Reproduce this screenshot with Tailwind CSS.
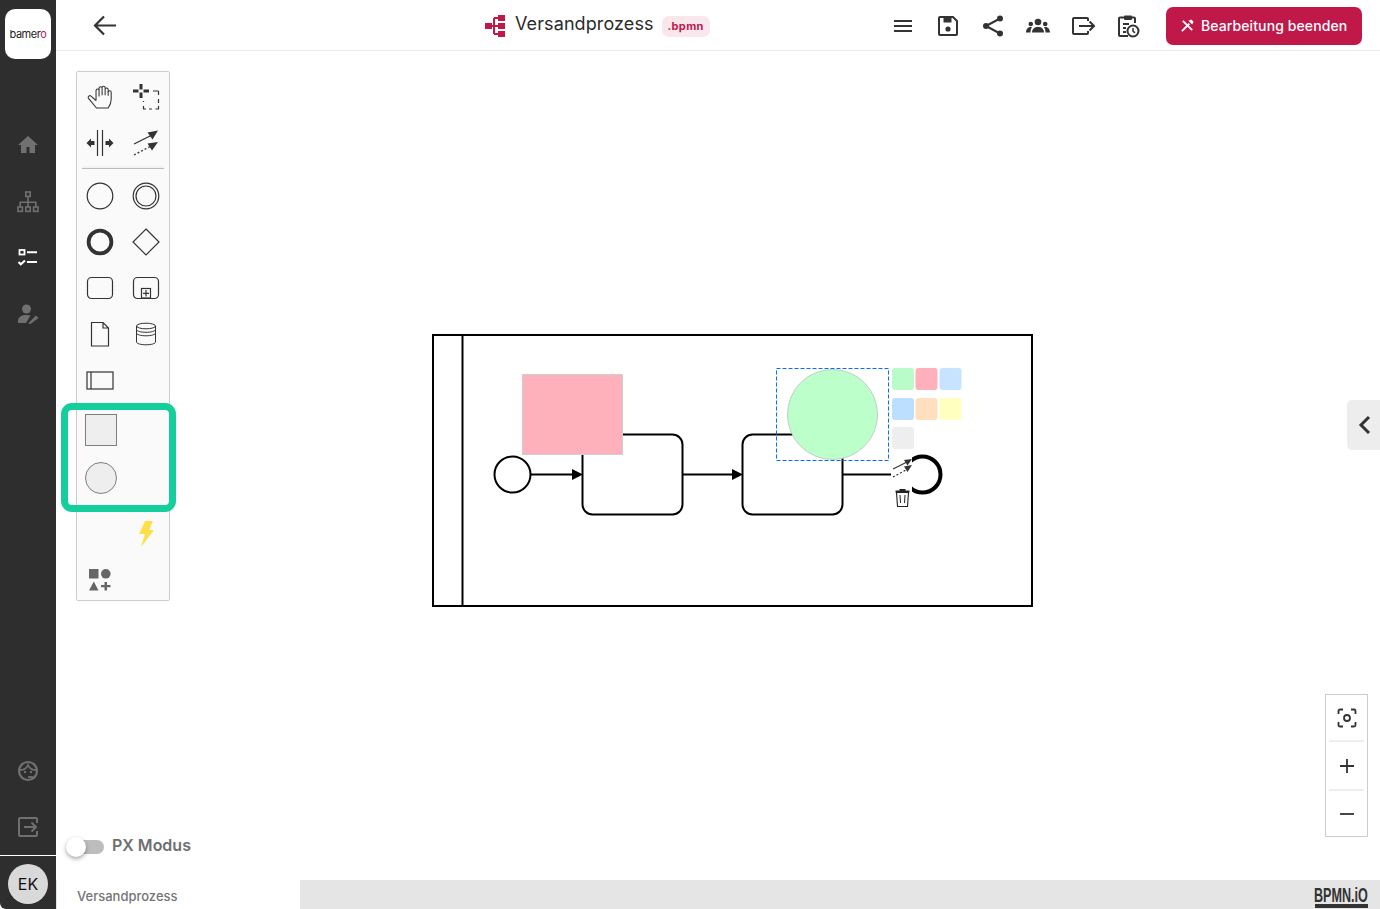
<!DOCTYPE html>
<html lang="de">
<head>
    <meta charset="UTF-8">
    <title>Versandprozess</title>
    <script src="https://cdn.jsdelivr.net/npm/@tailwindcss/browser@4"></script>
</head>
<body class="bg-white overflow-hidden font-['Inter','Liberation_Sans',sans-serif]">
<div class="flex h-[909px] w-[1380px]">

    <!-- sidebar -->
    <aside class="w-[56px] shrink-0 h-full bg-[#2e2e2e] rounded-bl-[6px] flex flex-col items-center">
        <div class="mt-[9px] w-[46px] h-[50px] bg-white rounded-[10px] flex items-center justify-center text-[11px] tracking-[-0.5px] text-[#222]">bamer<span class="text-[#c1184a]">o</span></div>

        <button class="mt-[74px] w-6 h-6 text-[#707070]">
            <svg viewBox="0 0 24 24" class="w-6 h-6" fill="currentColor"><path d="M12 3 2 12h3v8h5.500v-6h3v6H19v-8h3z"/></svg>
        </button>
        <button class="mt-[33px] w-6 h-6 text-[#707070]">
            <svg viewBox="0 0 24 24" class="w-6 h-6" fill="none" stroke="currentColor" stroke-width="1.600"><rect x="9.800" y="2" width="4.400" height="4.400"/><rect x="2" y="17" width="4.400" height="4.400"/><rect x="9.800" y="17" width="4.400" height="4.400"/><rect x="17.600" y="17" width="4.400" height="4.400"/><path d="M12 6.400V17M4.200 17v-4.800h15.600V17"/></svg>
        </button>
        <button class="mt-[32px] w-6 h-6 text-white">
            <svg viewBox="0 0 24 24" class="w-6 h-6" fill="none" stroke="currentColor"><rect x="3.500" y="4" width="5" height="4.500" stroke-width="1.800"/><path d="M11 6.200h10M11 16h10" stroke-width="2"/><path d="m2.500 16 2.300 2.300L9 14.500" stroke-width="2"/></svg>
        </button>
        <button class="mt-[32px] w-6 h-6 text-[#707070]">
            <svg viewBox="0 0 24 24" class="w-6 h-6" fill="currentColor"><circle cx="10.500" cy="7" r="4.500"/><path d="M2 21v-2.500C2 15 6 13 10.500 13c1.500 0 2.800.2 4 .6L10 21z"/><path d="m12 21.500 8-8 2.500 2.500-8 6z"/></svg>
        </button>

        <button class="mt-auto w-6 h-6 text-[#707070]">
            <svg viewBox="0 0 24 24" class="w-6 h-6" fill="none" stroke="currentColor" stroke-width="2.200"><circle cx="12" cy="12" r="9"/><path d="M4 11c3.500 0 6.500-1.500 8-5 1.500 3.500 4.500 5 8 5" stroke-width="1.800"/><circle cx="9" cy="13" r="1.200" fill="currentColor" stroke="none"/><circle cx="15" cy="13" r="1.200" fill="currentColor" stroke="none"/><path d="M12 18h5" stroke-width="1.800"/></svg>
        </button>
        <button class="mt-[32px] mb-[16px] w-6 h-6 text-[#707070]">
            <svg viewBox="0 0 24 24" class="w-6 h-6" fill="none" stroke="currentColor" stroke-width="2"><path d="M21 8V4a1 1 0 0 0-1-1H4a1 1 0 0 0-1 1v16a1 1 0 0 0 1 1h16a1 1 0 0 0 1-1v-4"/><path d="M8 12h12M15.500 7.500 20 12l-4.500 4.500"/></svg>
        </button>
        <div class="w-full border-t border-white pt-[8px] pb-[5px] flex justify-center">
            <div class="w-10 h-10 rounded-full bg-[#d9d9d9] flex items-center justify-center text-[16px] text-[#111]">EK</div>
        </div>
    </aside>

    <main class="relative flex-1 flex flex-col min-w-0">
        <!-- top bar -->
        <header class="h-[51px] shrink-0 border-b border-[#eaeaea] flex items-center relative">
            <button class="ml-[37px] w-6 h-6 text-[#333]">
                <svg viewBox="0 0 24 24" class="w-6 h-6" fill="none" stroke="currentColor" stroke-width="2.200"><path d="M23 12.500H3M11 3.500l-9 9 9 9"/></svg>
            </button>
            <div class="ml-[368px] flex items-center">
                <svg viewBox="0 0 20 22" class="w-[20px] h-[22px] text-[#c1184a] mt-[2px]" fill="currentColor"><rect x="0" y="8" width="7" height="6"/><rect x="7" y="10" width="6" height="2"/><rect x="8" y="3" width="2" height="16"/><rect x="13" y="0" width="7" height="6"/><rect x="13" y="8" width="7" height="6"/><rect x="13" y="16" width="7" height="6"/><rect x="9" y="2" width="5" height="2"/><rect x="9" y="18" width="5" height="2"/></svg>
                <span class="ml-[10px] text-[18px] leading-none tracking-[0.1px] text-[#2b2b2b] relative top-[-1px]">Versandprozess</span>
                <span class="ml-[8px] mt-[2px] h-[21px] w-[48px] rounded-[7px] bg-[#f9e7ed] text-[#c1184a] text-[11px] font-bold tracking-[0.4px] flex items-center justify-center">.bpmn</span>
            </div>
            <div class="ml-[181px] mt-[2px] flex items-center gap-[21px] text-[#333]">
                <svg viewBox="0 0 24 24" class="w-6 h-6" fill="none" stroke="currentColor" stroke-width="2"><path d="M3 7h18M3 12h18M3 17h18"/></svg>
                <svg viewBox="0 0 24 24" class="w-6 h-6" fill="none" stroke="currentColor" stroke-width="2"><path d="M4 3h13l4 4v13a1 1 0 0 1-1 1H4a1 1 0 0 1-1-1V4a1 1 0 0 1 1-1z"/><path d="M7.500 3.500h8v5h-8z" fill="currentColor" stroke="none"/><circle cx="12" cy="15" r="2.600" fill="currentColor" stroke="none"/></svg>
                <svg viewBox="0 0 24 24" class="w-6 h-6" fill="currentColor"><circle cx="19" cy="4.500" r="3"/><circle cx="5" cy="12" r="3"/><circle cx="19" cy="19.500" r="3"/><path d="M5 12 19 4.500M5 12l14 7.500" fill="none" stroke="currentColor" stroke-width="2"/></svg>
                <svg viewBox="0 0 24 24" class="w-6 h-6" fill="currentColor"><circle cx="12" cy="8" r="3.300"/><circle cx="4.800" cy="10" r="2.300"/><circle cx="19.200" cy="10" r="2.300"/><path d="M6 18.500c0-3.500 2.500-5.500 6-5.500s6 2 6 5.500z"/><path d="M0 18.500c0-3 1.500-5.500 4.800-5.500.5 0 .8 0 1.200.2-1 1.200-1.500 3-1.500 5.300zM24 18.500c0-3-1.500-5.500-4.800-5.500-.5 0-.8 0-1.200.2 1 1.200 1.500 3 1.500 5.300z"/></svg>
                <svg viewBox="0 0 24 24" class="w-6 h-6" fill="none" stroke="currentColor" stroke-width="2"><path d="M17 7V5a1 1 0 0 0-1-1H3a1 1 0 0 0-1 1v14a1 1 0 0 0 1 1h13a1 1 0 0 0 1-1v-2"/><path d="M8 12h15M18.500 7.500 23 12l-4.500 4.500"/></svg>
                <svg viewBox="0 0 24 24" class="w-6 h-6" fill="none" stroke="currentColor" stroke-width="2"><path d="M9 3.500H4a1 1 0 0 0-1 1V21a1 1 0 0 0 1 1h8M15 3.500h3a1 1 0 0 1 1 1V9"/><rect x="8" y="1.500" width="8" height="4.500" rx="1" fill="currentColor" stroke="none"/><path d="M7 10h6M7 14h3M7 18h3" stroke-width="1.800"/><circle cx="17" cy="17" r="5.500" fill="white"/><path d="M17 14v3.200l2 1.600" stroke-width="1.500"/></svg>
            </div>
            <button class="ml-[26px] mt-[1px] w-[196px] h-[38px] rounded-[7px] bg-[#c1184a] text-white text-[14px] font-medium tracking-[0.1px] flex items-center justify-center gap-[6px]">
                <svg viewBox="0 0 16 16" class="w-[15px] h-[15px]" fill="none" stroke="currentColor" stroke-width="2"><path d="m2 14 8-8M3 3l10 10"/><path d="m9 3 4 4 1.500-3-2.500-2.500z" fill="currentColor" stroke="none"/></svg>
                Bearbeitung beenden
            </button>
        </header>

        <!-- canvas -->
        <div class="relative flex-1">
            <!-- palette -->
            <div class="absolute left-[20px] top-[20px] w-[94px] h-[530px] bg-[#fafafa] border border-[#cccccc] rounded-[2px] pt-[2px] text-[#333]">
                <div class="grid grid-cols-2">
                    <div class="h-[46px] flex items-center justify-center">
                        <svg viewBox="0 0 24 24" class="w-[28px] h-[28px]" fill="none" stroke="currentColor" stroke-width="0.900"><path d="M19 11V5.500a1.300 1.300 0 0 0-2.600 0M16.400 10.500V4a1.300 1.300 0 0 0-2.600 0v6.500M13.800 10.500V4.500a1.300 1.300 0 0 0-2.600 0v7M11.200 11.500V6.500a1.300 1.300 0 0 0-2.600 0v8.500"/><path d="M19 8a1.300 1.300 0 0 1 2.600 0v6c0 3-1.500 6-2.500 7.500H9L2 13a1.500 1.500 0 0 1 2.300-1.800L8.600 15"/></svg>
                    </div>
                    <div class="h-[46px] flex items-center justify-center">
                        <svg viewBox="0 0 28 28" class="w-[28px] h-[28px]" fill="#333"><path d="M7.500 1h3v5.500h-3zM7.500 9.500h3V15h-3zM1 6.500h5.500v3H1zM11.500 6.500H17v3h-5.500z"/><path d="M21 8h5.500M26.500 8v4M26.500 16v4M26.500 23v3h-3M20 26h-3M14 26h-2.500v-3M11.500 19v-1" fill="none" stroke="#333" stroke-width="1.200"/></svg>
                    </div>
                    <div class="h-[46px] flex items-center justify-center">
                        <svg viewBox="0 0 28 28" class="w-[28px] h-[28px]" fill="#333"><path d="M11.500 1v26M16.500 1v26" fill="none" stroke="#333" stroke-width="1.200"/><path d="M0.500 14 5 9.500V12h3.500v4H5v2.500zM27.500 14 23 9.500V12h-3.500v4H23v2.500z"/></svg>
                    </div>
                    <div class="h-[46px] flex items-center justify-center">
                        <svg viewBox="0 0 28 28" class="w-[28px] h-[28px]" fill="#333"><path d="M2 15 20 6" fill="none" stroke="#333" stroke-width="1.300"/><path d="M26 1.500 15.500 3.500l5 7z"/><path d="m2 26 17-9" fill="none" stroke="#333" stroke-width="1.300" stroke-dasharray="2 2"/><path d="m26 13-10.500 1.500 4.500 7z"/></svg>
                    </div>
                </div>
                <div class="mx-[5px] h-[3px] bg-[#f3f3f3] border-b border-[#bbbbbb]"></div>
                <div class="grid grid-cols-2 mt-[4px]">
                    <div class="h-[46px] flex items-center justify-center"><svg viewBox="0 0 28 28" class="w-7 h-7" fill="none" stroke="#333" stroke-width="1.200"><circle cx="14" cy="14" r="12.800"/></svg></div>
                    <div class="h-[46px] flex items-center justify-center"><svg viewBox="0 0 28 28" class="w-7 h-7" fill="none" stroke="#333" stroke-width="1.200"><circle cx="14" cy="14" r="12.800"/><circle cx="14" cy="14" r="10"/></svg></div>
                    <div class="h-[46px] flex items-center justify-center"><svg viewBox="0 0 28 28" class="w-7 h-7" fill="none" stroke="#333" stroke-width="3.800"><circle cx="14" cy="14" r="11.400"/></svg></div>
                    <div class="h-[46px] flex items-center justify-center"><svg viewBox="0 0 28 28" class="w-7 h-7" fill="none" stroke="#333" stroke-width="1.200"><path d="M14 1 27 14 14 27 1 14z"/></svg></div>
                    <div class="h-[46px] flex items-center justify-center"><svg viewBox="0 0 28 28" class="w-7 h-7" fill="none" stroke="#333" stroke-width="1.200"><rect x="1.500" y="3.500" width="25" height="21" rx="4"/></svg></div>
                    <div class="h-[46px] flex items-center justify-center"><svg viewBox="0 0 28 28" class="w-7 h-7" fill="none" stroke="#333" stroke-width="1.200"><rect x="1.500" y="3.500" width="25" height="21" rx="4"/><rect x="9.500" y="14.500" width="9" height="9.500"/><path d="M14 16v6.500M11 19.300h6"/></svg></div>
                    <div class="h-[46px] flex items-center justify-center"><svg viewBox="0 0 28 28" class="w-7 h-7" fill="none" stroke="#333" stroke-width="1.200"><path d="M5.500 2.500H17l5.500 5.500v18h-17zM17 2.500V8h5.500"/></svg></div>
                    <div class="h-[46px] flex items-center justify-center"><svg viewBox="0 0 28 28" class="w-7 h-7" fill="none" stroke="#333" stroke-width="1"><ellipse cx="14" cy="6" rx="9.500" ry="2.800"/><path d="M4.500 6v16c0 1.600 4.300 2.800 9.500 2.800s9.500-1.200 9.500-2.800V6M4.500 9.500c0 1.600 4.300 2.800 9.500 2.800s9.500-1.200 9.500-2.800M4.500 13c0 1.600 4.300 2.800 9.500 2.800s9.500-1.200 9.500-2.800"/></svg></div>
                    <div class="h-[46px] flex items-center justify-center"><svg viewBox="0 0 28 28" class="w-7 h-7" fill="none" stroke="#333" stroke-width="1.200"><rect x="1" y="6" width="26" height="17"/><path d="M5 6v17"/></svg></div>
                    <div class="h-[46px]"></div>
                </div>
                <div class="h-[102px] pl-[8px] flex flex-col justify-center gap-[16px]">
                    <div class="w-[32px] h-[32px] bg-[#eeeeee] border border-[#7f7f7f]"></div>
                    <div class="w-[32px] h-[32px] rounded-full bg-[#eeeeee] border border-[#7f7f7f]"></div>
                </div>
                <div class="grid grid-cols-2 mt-[6px]">
                    <div class="h-[46px]"></div>
                    <div class="h-[46px] flex items-center justify-center">
                        <svg viewBox="0 0 16 28" class="w-[16px] h-[28px]" fill="#fde047"><path d="M7 1h8l-4 9h5L3 27l4-13H1z"/></svg>
                    </div>
                    <div class="h-[46px] flex items-center justify-center">
                        <svg viewBox="0 0 22 22" class="w-[22px] h-[22px]" fill="#666"><rect x="0" y="0" width="9.500" height="9.500"/><circle cx="16.800" cy="4.800" r="4.800"/><path d="M4.800 12.500 9.500 21.500H0z"/><path d="M15.500 13h2.500v3h3.500v2.200H18v3.300h-2.500v-3.300H12V16h3.500z"/></svg>
                    </div>
                </div>
            </div>
            <!-- palette highlight -->
            <div class="absolute left-[5px] top-[352px] w-[115px] h-[109px] border-[7px] border-[#14cf9b] rounded-[11px]"></div>

            <!-- diagram -->
            <svg class="absolute left-[370px] top-[280px]" width="610" height="280" viewBox="426 331 610 280" fill="none">
                <rect x="433" y="335" width="599" height="271" stroke="#000" stroke-width="2"/>
                <path d="M462.500 335v271" stroke="#000" stroke-width="2"/>
                <circle cx="512.500" cy="474.500" r="18" stroke="#000" stroke-width="2"/>
                <path d="M531 474.500h42M683 474.500h50M843 474.500h50" stroke="#000" stroke-width="2"/>
                <path d="m583 474.500-11-5.500v11zM743 474.500l-11-5.500v11z" fill="#000"/>
                <rect x="582.500" y="434.500" width="100" height="80" rx="10" fill="#fff" stroke="#000" stroke-width="2"/>
                <rect x="742.500" y="434.500" width="100" height="80" rx="10" fill="#fff" stroke="#000" stroke-width="2"/>
                <circle cx="922.500" cy="474.500" r="18" stroke="#000" stroke-width="4"/>
                <rect x="522.500" y="374.500" width="100" height="80" fill="#ffb1bb" stroke="#cfcfcf"/>
                <circle cx="832.500" cy="414.500" r="45" fill="#bcffcb" stroke="#bfd0c2"/>
                <rect x="776.500" y="368.500" width="112" height="92" stroke="#0a6cff" stroke-dasharray="4 2"/>

                <!-- context pad -->
                <rect x="891" y="456" width="21" height="54" fill="#fff"/>
                <rect x="892" y="368" width="22" height="22" rx="3" fill="#b9fcc9"/>
                <rect x="915.500" y="368" width="22" height="22" rx="3" fill="#ffb0ba"/>
                <rect x="939.500" y="368" width="22" height="22" rx="3" fill="#c8e3ff"/>
                <rect x="892" y="398" width="22" height="22" rx="3" fill="#bcdfff"/>
                <rect x="915.500" y="398" width="22" height="22" rx="3" fill="#ffdfbd"/>
                <rect x="939.500" y="398" width="22" height="22" rx="3" fill="#ffffc0"/>
                <rect x="892" y="427" width="22" height="22" rx="3" fill="#eeeeee"/>
                <path d="m893 469 14-7" stroke="#333" stroke-width="1.200"/>
                <path d="m912 459-8 1 3.500 5.500z" fill="#333"/>
                <path d="m893 477 13-7" stroke="#333" stroke-width="1.200" stroke-dasharray="2 2"/>
                <path d="m912 465-8 1.500 3.500 5.500z" fill="#333"/>
                <path d="M896.500 492.500h12l-1 14h-10z" stroke="#222" stroke-width="1.100"/>
                <path d="M895.500 490.500h14v2h-14z" fill="#222"/>
                <path d="M899.500 489h6v2h-6z" fill="#222"/>
                <path d="m900 495 .5 8M905 495l-.5 8" stroke="#222"/>
            </svg>

            <!-- PX toggle -->
            <div class="absolute left-[11px] top-[782px] flex items-center">
                <div class="relative w-[37px] h-[14px] rounded-full bg-[#bdbdbd] mt-[4px]">
                    <span class="absolute left-[-1px] top-[-3px] w-[20px] h-[20px] rounded-full bg-white shadow-[0_2px_4px_rgba(0,0,0,0.35)]"></span>
                </div>
                <span class="ml-[8px] text-[16px] font-semibold text-[#6f6f6f]">PX Modus</span>
            </div>

            <!-- right handle -->
            <button class="absolute right-0 top-[349px] w-[33px] h-[50px] bg-[#ededed] rounded-l-[5px] flex items-center justify-center text-[#333]">
                <svg viewBox="0 0 16 20" class="w-[16px] h-[20px] relative left-[1px]" fill="none" stroke="currentColor" stroke-width="3"><path d="M12 2 4 10l8 8"/></svg>
            </button>

            <!-- zoom controls -->
            <div class="absolute left-[1269px] top-[643px] w-[43px] h-[143px] border border-[#cccccc] bg-white flex flex-col text-[#333]">
                <button class="h-[45px] flex items-center justify-center">
                    <svg viewBox="0 0 20 20" class="w-5 h-5" fill="none" stroke="currentColor" stroke-width="1.800"><path d="M1.500 6V3a1.500 1.500 0 0 1 1.500-1.500h3M14 1.500h3A1.500 1.500 0 0 1 18.500 3v3M18.500 14v3a1.500 1.500 0 0 1-1.500 1.500h-3M6 18.500H3A1.500 1.500 0 0 1 1.500 17v-3"/><circle cx="10" cy="10" r="3"/></svg>
                </button>
                <div class="mx-[3px] h-[2px] bg-[#eeeeee]"></div>
                <button class="h-[47px] flex items-center justify-center">
                    <svg viewBox="0 0 16 16" class="w-[16px] h-[16px]" fill="none" stroke="currentColor" stroke-width="1.800"><path d="M8 1v14M1 8h14"/></svg>
                </button>
                <div class="mx-[3px] h-[2px] bg-[#eeeeee]"></div>
                <button class="flex-1 flex items-center justify-center">
                    <svg viewBox="0 0 16 16" class="w-[16px] h-[16px]" fill="none" stroke="currentColor" stroke-width="1.800"><path d="M1 8h14"/></svg>
                </button>
            </div>
        </div>

        <!-- footer tabs -->
        <footer class="h-[29px] shrink-0 bg-[#e5e5e5] flex items-stretch relative">
            <div class="ml-[1px] w-[243px] bg-white pl-[20px] pt-[8px] text-[13px] leading-[16px] font-medium text-[#757575]">Versandprozess</div>
            <div class="ml-auto mr-[12px] w-[53px] mt-[5px] h-[23px] border-b-[4px] border-[#333] flex justify-end items-center">
                <span class="inline-block shrink-0 origin-right scale-x-[0.6] text-[21px] leading-none font-bold text-[#333] whitespace-nowrap font-['Liberation_Sans',sans-serif]">BPMN.iO</span>
            </div>
        </footer>
    </main>
</div>
</body>
</html>
